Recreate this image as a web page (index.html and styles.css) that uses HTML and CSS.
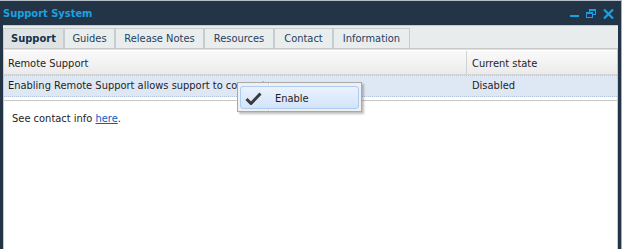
FILE: index.html
```
<!DOCTYPE html>
<html>
<head>
<meta charset="utf-8">
<link rel="stylesheet" href="styles.css">
</head>
<body>
<div class="window">
  <div class="titlebar">
    <span class="title">Support System</span>
    <div class="controls">
      <svg class="ctl" width="10" height="10" viewBox="0 0 10 10"><rect x="0" y="6" width="9" height="2" fill="#1ba1e2"/></svg>
      <svg class="ctl" width="11" height="10" viewBox="0 0 11 10"><rect x="3.5" y="0.5" width="6" height="5" fill="none" stroke="#1ba1e2" stroke-width="1"/><rect x="3" y="0" width="7" height="2" fill="#1ba1e2"/><rect x="0.5" y="3.5" width="6" height="5" fill="#233446" stroke="#1ba1e2" stroke-width="1"/><rect x="0" y="3" width="7" height="2" fill="#1ba1e2"/></svg>
      <svg class="ctl" width="11" height="10" viewBox="0 0 11 10"><path d="M1 0.5 L10 9.5 M10 0.5 L1 9.5" stroke="#1ba1e2" stroke-width="2.2"/></svg>
    </div>
  </div>
  <div class="panel">
    <div class="tabs">
      <div class="tab active t-support">Support</div>
      <div class="tab t-guides">Guides</div>
      <div class="tab t-release">Release Notes</div>
      <div class="tab t-resources">Resources</div>
      <div class="tab t-contact">Contact</div>
      <div class="tab t-info">Information</div>
    </div>
    <div class="content">
      <div class="grid">
        <div class="grid-head">
          <div class="cell c1">Remote Support</div>
          <div class="cell c2">Current state</div>
        </div>
        <div class="grid-row selected">
          <div class="cell c1">Enabling Remote Support allows support to connect.</div>
          <div class="cell c2">Disabled</div>
        </div>
      </div>
      <p class="info">See contact info <a href="#" class="link">here</a>.</p>
    </div>
  </div>
  <div class="menu">
    <div class="menu-item">
      <svg class="check" width="17" height="13" viewBox="0 0 17 13"><path d="M1.5 7 L6 11.5 L15.5 1.5" fill="none" stroke="#3a3a3a" stroke-width="3" stroke-linejoin="miter"/></svg>
      <span class="menu-label">Enable</span>
    </div>
  </div>
</div>
</body>
</html>
```
FILE: styles.css
```
html, body {
  margin: 0;
  padding: 0;
  background: #ffffff;
}
body {
  width: 624px;
  height: 249px;
  overflow: hidden;
  font-family: "DejaVu Sans Condensed", "DejaVu Sans", "Liberation Sans", sans-serif;
  font-size: 11px;
  color: #1e1e1e;
}
.window {
  position: relative;
  box-sizing: border-box;
  width: 622px;
  height: 249px;
  background: #233446;
  border-top: 1px solid #b4bec8;
  border-right: 1px solid #9fb1c4;
  padding: 0 3px 0 3px;
  display: flex;
  flex-direction: column;
}
.titlebar {
  height: 24px;
  display: flex;
  align-items: center;
  justify-content: space-between;
  flex: none;
}
.title {
  color: #1ba1e2;
  font-weight: bold;
  font-size: 11px;
  margin-top: 1px;
}
.controls {
  display: flex;
  align-items: center;
  gap: 6px;
  padding-right: 4px;
  margin-top: 1px;
}
.panel {
  flex: 1;
  display: flex;
  flex-direction: column;
  background: #e9ecec;
  border-top: 1px solid #c3cbd0;
}
.tabs {
  display: flex;
  height: 22px;
  padding-top: 2px;
  box-sizing: border-box;
  flex: none;
}
.tab {
  box-sizing: border-box;
  height: 20px;
  border: 1px solid #c7cccc;
  border-bottom: none;
  background: #eaeded;
  color: #1f4160;
  text-align: center;
  line-height: 19px;
  white-space: nowrap;
}
.tab.active {
  background: #dfe3e3;
  font-weight: bold;
  color: #17324c;
}
.t-support { width: 61px; }
.t-guides { width: 51px; }
.t-release { width: 89px; }
.t-resources { width: 70px; }
.t-contact { width: 59px; }
.t-info { width: 77px; }
.content {
  flex: 1;
  background: #ffffff;
  border: 1px solid #c9c9c9;
  border-bottom: none;
}
.grid {
  border-bottom: 1px solid #c8c8c8;
  height: 52px;
  box-sizing: border-box;
  border-top: 1px solid #e1e1e1;
  padding-top: 1px;
}
.grid-head {
  display: flex;
  height: 24px;
  box-sizing: border-box;
  background: linear-gradient(#fafafa, #ebebeb);
  border-bottom: 1px solid #d6d6d6;
}
.grid-row {
  display: flex;
  height: 22px;
  box-sizing: border-box;
}
.grid-row.selected {
  background: #dee8f5;
  border-top: 1px dotted #b3c6de;
  border-bottom: 1px dotted #b3c6de;
}
.cell {
  box-sizing: border-box;
  padding-left: 4px;
  white-space: nowrap;
  overflow: hidden;
}
.grid-head .cell {
  line-height: 23px;
  padding-top: 1px;
}
.grid-row .cell {
  line-height: 19px;
}
.c1 {
  width: 463px;
}
.grid-head .c1 {
  border-right: 1px solid #d2d2d2;
}
.c2 {
  flex: 1;
  padding-left: 5px;
}
.info {
  margin: 11px 0 0 8px;
  line-height: 14px;
}
.link {
  color: #0b5cc9;
  text-decoration: underline;
}
.menu {
  position: absolute;
  left: 237px;
  top: 81px;
  width: 125px;
  height: 30px;
  box-sizing: border-box;
  background: #f0f0f0;
  border: 1px solid #a9a9a9;
  box-shadow: 2px 2px 2px rgba(0,0,0,0.25);
  padding: 3px 2px 2px 2px;
  background-image: linear-gradient(90deg, transparent 30px, #d8d8d8 30px, #d8d8d8 31px, #ffffff 31px, #ffffff 32px, transparent 32px);
}
.menu-item {
  box-sizing: border-box;
  height: 23px;
  border: 1px solid #aecbf0;
  border-radius: 3px;
  background: linear-gradient(#eaf2fd, #d3e4fa);
  display: flex;
  align-items: center;
}
.check {
  margin-left: 4px;
  margin-top: 1px;
}
.menu-label {
  margin-left: 13px;
  padding-top: 2px;
  color: #1e1e1e;
  font-size: 11px;
}
```
